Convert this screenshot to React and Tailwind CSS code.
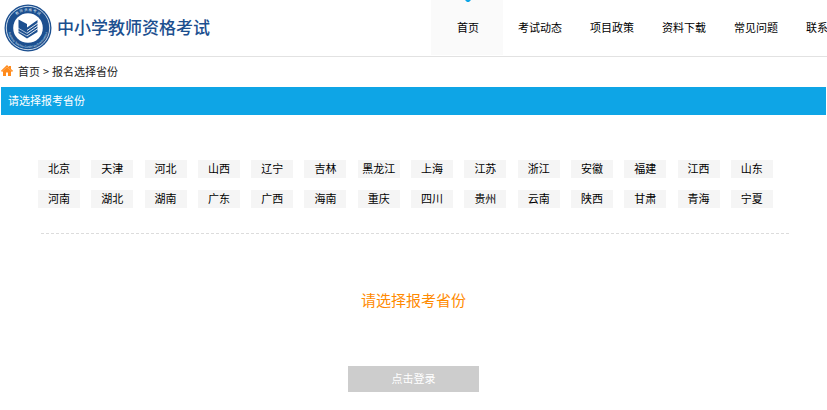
import React, { useState } from "react";

const navItems = ["首页", "考试动态", "项目政策", "资料下载", "常见问题", "联系我们"];

const provinces = [
  "北京", "天津", "河北", "山西", "辽宁", "吉林", "黑龙江",
  "上海", "江苏", "浙江", "安徽", "福建", "江西", "山东",
  "河南", "湖北", "湖南", "广东", "广西", "海南", "重庆",
  "四川", "贵州", "云南", "陕西", "甘肃", "青海", "宁夏",
];

// Round seal with the open book
const Seal = () => (
  <svg viewBox="0 0 48 48" className="w-12 h-12 shrink-0" aria-hidden="true">
    <defs>
      <path id="seal-top" d="M7 24a17 17 0 0 1 34 0" />
      <path id="seal-bottom" d="M4 24a20 20 0 0 0 40 0" />
    </defs>
    <circle cx="24" cy="24" r="23.5" fill="#1c4f8f" />
    <circle cx="24" cy="24" r="21.7" fill="none" stroke="#dbe6f2" strokeWidth="0.9" />
    <circle cx="24" cy="24" r="14.8" fill="#fff" />
    <text fontSize="3.5" fill="#dce7f3" textAnchor="middle">
      <textPath href="#seal-top" startOffset="50%">教 师 资 格 考 试</textPath>
    </text>
    <text fontSize="2.8" fill="#dce7f3" textAnchor="middle">
      <textPath href="#seal-bottom" startOffset="50%">National Teacher Certificate Examination</textPath>
    </text>
    <path d="M14.500 15.500L23 20v3.500l10.500-7.500v12L23 34.500l-8.500-5.500z" fill="#1c4f8f" />
    <path d="M23 26.500l11-7.500M23 29.300l11-7.500M23 32l11-7.500" fill="none" stroke="#fff" strokeWidth="0.9" />
    <path d="M14 24l9 5.300M14 27l9 5" fill="none" stroke="#fff" strokeWidth="0.6" />
  </svg>
);

const HomeIcon = () => (
  <svg viewBox="0 0 12 12" className="w-3 h-3 shrink-0" aria-hidden="true">
    <path d="M6 0L0 5.800l1 1.200 1-.8V11h3V7.500h2V11h3V6.200l1 .8 1-1.200-2-1.900V1H8v1z" fill="#ff8a1c" />
    <path d="M1 6.500l5-4.500 5 4.500" fill="none" stroke="#ffc48a" strokeWidth="0.5" />
  </svg>
);

const NavItem = ({ label, active }) => (
  <li className="w-[72px] shrink-0">
    <a
      href="#"
      className={`relative flex h-[55px] items-center justify-center pl-[2px] pb-[2px] ${active ? "bg-[#fafafa]" : ""}`}
    >
      {active && (
        <svg viewBox="0 0 6 2" className="absolute top-0 w-[6px] h-[2px]" aria-hidden="true">
          <path d="M0 0h6L4 2H2z" fill="#0ea5e6" />
        </svg>
      )}
      {label}
    </a>
  </li>
);

export default function App() {
  const [selected, setSelected] = useState("");

  return (
    <div className="min-h-screen bg-white text-[11px] leading-4 text-black font-['Noto_Sans_CJK_SC',sans-serif]">
      <header className="flex overflow-hidden border-b border-[#e2e2e2]">
        <div className="flex w-[431px] shrink-0 items-center gap-[5px] pl-1">
          <Seal />
          <h1 className="pb-[2px] text-[17px] leading-6 font-medium text-[#1c4f8f]">中小学教师资格考试</h1>
        </div>
        <nav className="h-14">
          <ul className="flex">
            {navItems.map((item, i) => (
              <NavItem key={item} label={item} active={i === 0} />
            ))}
          </ul>
        </nav>
      </header>

      <div className="flex h-[30px] items-center gap-1 pb-[2px] pl-[1px] text-[#222]">
        <HomeIcon />
        <div className="flex gap-[3px] pl-[1px]">
          <a href="#">首页</a>
          <span>&gt;</span>
          <span>报名选择省份</span>
        </div>
      </div>

      <main className="px-[1px]">
        <h2 className="flex h-7 items-center bg-[#0ea5e6] pb-[2px] pl-[7px] text-white">请选择报考省份</h2>

        <div className="mt-[45px] pl-[37px] pr-[53px]">
          <div className="grid grid-cols-[repeat(14,42px)] justify-between gap-y-3">
            {provinces.map((name) => (
              <button
                key={name}
                type="button"
                onClick={() => setSelected(name)}
                className="h-[18px] cursor-pointer bg-[#f5f5f5] pb-[2px] text-center whitespace-nowrap"
              >
                {name}
              </button>
            ))}
          </div>
        </div>
        <hr className="mt-[25px] mr-[37px] ml-10 border-t border-dashed border-[#dcdcdc]" />

        <div className="flex flex-col items-center pt-[54px]">
          <p className="text-[15px] leading-6 text-[#ff8a00]">{selected || "请选择报考省份"}</p>
          <button type="button" disabled={!selected} className="mt-[54px] h-[26px] w-[131px] bg-[#cdcdcd] pb-[2px] text-white">
            点击登录
          </button>
        </div>
      </main>
    </div>
  );
}
